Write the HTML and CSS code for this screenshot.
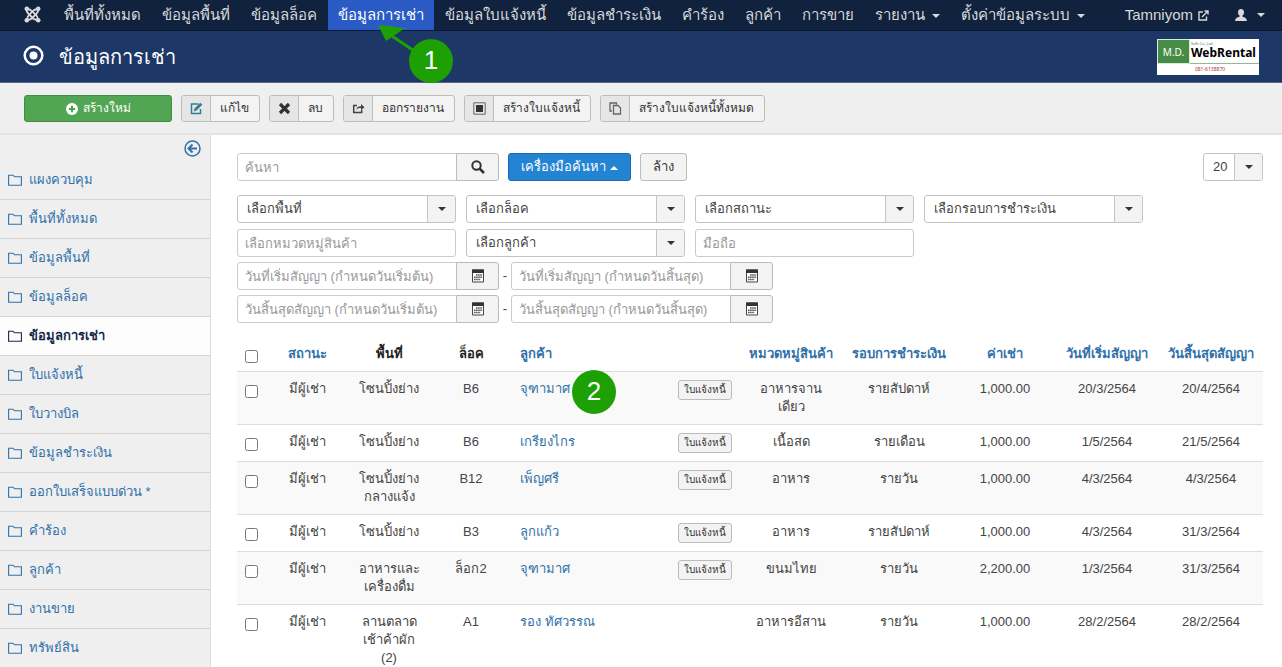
FILE: index.html
```html
<!DOCTYPE html>
<html lang="th">
<head>
<meta charset="utf-8">
<title>ข้อมูลการเช่า</title>
<link rel="stylesheet" href="styles.css">
</head>
<body>
<svg class="sprite" aria-hidden="true">
  <symbol id="folder" viewBox="0 0 14 12"><path d="M.6 11.2V1.2H5l1.6 1.6h6.8v8.400z" fill="none" stroke="currentColor" stroke-width="1.1"/></symbol>
  <symbol id="calendar" viewBox="0 0 14 14"><path d="M1.500 1h11v12h-11z" fill="#fff" stroke="#444"/><path d="M1 .5h12V4H1z" fill="#333"/><path d="M5 6h6.500M3 8.200h8.500M3 10.500h6.500" stroke="#555" stroke-width="1.400" stroke-dasharray="1.600 .5"/></symbol>
</svg>

<nav class="navbar">
  <a class="brand" href="#" aria-label="Joomla"><svg width="17" height="17" viewBox="0 0 17 17"><g fill="none" stroke="currentColor" stroke-width="1.800"><path d="M3 3.500C5.500 2.500 6.800 4 8 5.200l4.500 4.500c1 1 1.500 2.500 1 4.300"/><path d="M13.800 3c1 2.500-.5 3.800-1.700 5l-4.400 4.500c-1 1-2.500 1.500-4.400 1"/><path d="M3 3c-1 2.500.5 3.800 1.700 5l4.500 4.500c1 1 2.500 1.500 4.300 1"/><path d="M13.800 3.500C11.500 2.500 10 4 8.800 5.200L4.500 9.700c-1 1-1.500 2.500-1 4.300"/></g><g fill="currentColor"><circle cx="2.800" cy="2.800" r="2.300"/><circle cx="14.200" cy="2.800" r="2.300"/><circle cx="2.800" cy="14.200" r="2.300"/><circle cx="14.200" cy="14.200" r="2.300"/></g></svg></a>
  <a class="nav-item" href="#">พื้นที่ทั้งหมด</a>
  <a class="nav-item" href="#">ข้อมูลพื้นที่</a>
  <a class="nav-item" href="#">ข้อมูลล็อค</a>
  <a class="nav-item active" href="#" aria-current="page">ข้อมูลการเช่า</a>
  <a class="nav-item" href="#">ข้อมูลใบแจ้งหนี้</a>
  <a class="nav-item" href="#">ข้อมูลชำระเงิน</a>
  <a class="nav-item" href="#">คำร้อง</a>
  <a class="nav-item" href="#">ลูกค้า</a>
  <a class="nav-item" href="#">การขาย</a>
  <a class="nav-item" href="#">รายงาน <span class="caret"></span></a>
  <a class="nav-item" href="#">ตั้งค่าข้อมูลระบบ <span class="caret"></span></a>
  <div class="nav-right">
    <a class="nav-item site" href="#">Tamniyom <svg width="11" height="11" viewBox="0 0 11 11" fill="none" stroke="currentColor" stroke-width="1.400"><path d="M5 2H1v8h7.500V6.500M4 7l5.500-5.500M6.500 1H10v3.500"/></svg></a>
    <a class="nav-item user" href="#" aria-label="User"><svg width="12" height="12" viewBox="0 0 12 12" fill="currentColor"><path d="M6 0c2 0 3 1.300 3 3.200C9 5 8.200 6 7.500 6.600v1.200c2 .6 4.300 1.200 4.300 4.200H.2c0-3 2.300-3.600 4.300-4.200V6.600C3.800 6 3 5 3 3.200 3 1.300 4 0 6 0z"/></svg><span class="caret"></span></a>
  </div>
</nav>

<header class="header">
  <svg class="page-icon" width="21" height="21" viewBox="0 0 21 21"><circle cx="10.500" cy="10.500" r="8.800" fill="none" stroke="#fff" stroke-width="2.500"/><circle cx="10.500" cy="10.500" r="4" fill="#fff"/></svg>
  <h1>ข้อมูลการเช่า</h1>
  <div class="logo">
    <div class="logo-md">M.D.</div>
    <div class="logo-name"><small>Soft Co.,Ltd.</small><b>WebRental</b></div>
    <div class="logo-phone">081-6138870</div>
  </div>
</header>

<div class="toolbar">
  <button class="btn-new"><svg width="12" height="12" viewBox="0 0 12 12"><circle cx="6" cy="6" r="6" fill="#fff"/><path d="M6 2.800v6.400M2.800 6h6.400" stroke="#46a546" stroke-width="2"/></svg>สร้างใหม่</button>
  <button class="tool"><span class="tool-icon"><svg width="13" height="13" viewBox="0 0 13 13"><path d="M8.500 2H1.500v9.500h9V7" fill="none" stroke="#2f7f91" stroke-width="1.500"/><path d="M3.800 9.400l.7-2.800L10.300.8l2 2-5.800 5.800z" fill="#2f7f91"/></svg></span><span class="tool-text">แก้ไข</span></button>
  <button class="tool"><span class="tool-icon"><svg width="13" height="13" viewBox="0 0 13 13"><path d="M2 2l9 9M11 2l-9 9" stroke="#333" stroke-width="3.200"/></svg></span><span class="tool-text">ลบ</span></button>
  <button class="tool"><span class="tool-icon"><svg width="13" height="13" viewBox="0 0 13 13"><path d="M5 3.500H1.700v7h8V8" fill="none" stroke="#444" stroke-width="1.500"/><path d="M4.500 8c0-3 1.500-3.800 4.500-3.800V2l3.500 3.200L9 8.300V6C7 6 5.500 6 4.500 8z" fill="#444"/></svg></span><span class="tool-text">ออกรายงาน</span></button>
  <button class="tool"><span class="tool-icon"><svg width="13" height="13" viewBox="0 0 13 13"><path d="M.8.8h11.400v11.400H.8z" fill="none" stroke="#666"/><path d="M3 3h7v7H3z" fill="#333"/></svg></span><span class="tool-text">สร้างใบแจ้งหนี้</span></button>
  <button class="tool"><span class="tool-icon"><svg width="13" height="13" viewBox="0 0 13 13"><path d="M3 9H1V1h6.500v1.500M4.500 3.500h4.500l2.500 2.500v6h-7z" fill="none" stroke="#666" stroke-width="1.300"/></svg></span><span class="tool-text">สร้างใบแจ้งหนี้ทั้งหมด</span></button>
</div>

<div class="page">
  <aside class="sidebar">
    <button class="collapse" aria-label="ซ่อนเมนู"><svg width="17" height="17" viewBox="0 0 17 17" fill="none" stroke="currentColor"><circle cx="8.500" cy="8.500" r="7.500" stroke-width="1.500"/><path d="M13 8.500H5M8.500 4.500l-4 4 4 4" stroke-width="2"/></svg></button>
    <a href="#"><svg><use href="#folder"/></svg>แผงควบคุม</a>
    <a href="#"><svg><use href="#folder"/></svg>พื้นที่ทั้งหมด</a>
    <a href="#"><svg><use href="#folder"/></svg>ข้อมูลพื้นที่</a>
    <a href="#"><svg><use href="#folder"/></svg>ข้อมูลล็อค</a>
    <a class="current" href="#"><svg><use href="#folder"/></svg>ข้อมูลการเช่า</a>
    <a href="#"><svg><use href="#folder"/></svg>ใบแจ้งหนี้</a>
    <a href="#"><svg><use href="#folder"/></svg>ใบวางบิล</a>
    <a href="#"><svg><use href="#folder"/></svg>ข้อมูลชำระเงิน</a>
    <a href="#"><svg><use href="#folder"/></svg>ออกใบเสร็จแบบด่วน *</a>
    <a href="#"><svg><use href="#folder"/></svg>คำร้อง</a>
    <a href="#"><svg><use href="#folder"/></svg>ลูกค้า</a>
    <a href="#"><svg><use href="#folder"/></svg>งานขาย</a>
    <a href="#"><svg><use href="#folder"/></svg>ทรัพย์สิน</a>
  </aside>

  <main class="main">
    <div class="search-row">
      <div class="group"><input class="field" type="text" placeholder="ค้นหา" aria-label="ค้นหา"><button class="addon" aria-label="ค้นหา"><svg width="14" height="14" viewBox="0 0 14 14" fill="none" stroke="#333"><circle cx="5.500" cy="5.500" r="4.200" stroke-width="2"/><path d="M8.500 8.500l4.500 4.500" stroke-width="2.500"/></svg></button></div>
      <button class="btn-tools">เครื่องมือค้นหา <span class="caret up"></span></button>
      <button class="btn-clear">ล้าง</button>
      <span class="select limit"><select aria-label="จำนวน"><option>20</option></select><i class="arrow"></i></span>
    </div>
    <div class="filters">
      <span class="select"><select aria-label="พื้นที่"><option>เลือกพื้นที่</option></select><i class="arrow"></i></span>
      <span class="select"><select aria-label="ล็อค"><option>เลือกล็อค</option></select><i class="arrow"></i></span>
      <span class="select"><select aria-label="สถานะ"><option>เลือกสถานะ</option></select><i class="arrow"></i></span>
      <span class="select"><select aria-label="รอบการชำระเงิน"><option>เลือกรอบการชำระเงิน</option></select><i class="arrow"></i></span>
      <input class="field" type="text" placeholder="เลือกหมวดหมู่สินค้า" aria-label="หมวดหมู่สินค้า">
      <span class="select"><select aria-label="ลูกค้า"><option>เลือกลูกค้า</option></select><i class="arrow"></i></span>
      <input class="field" type="text" placeholder="มือถือ" aria-label="มือถือ">
    </div>
    <div class="dates">
      <div class="group"><input class="field" type="text" placeholder="วันที่เริ่มสัญญา (กำหนดวันเริ่มต้น)" aria-label="วันที่เริ่มสัญญา เริ่มต้น"><button class="addon" aria-label="ปฏิทิน"><svg width="14" height="14"><use href="#calendar"/></svg></button></div>
      <span class="dash">-</span>
      <div class="group"><input class="field" type="text" placeholder="วันที่เริ่มสัญญา (กำหนดวันสิ้นสุด)" aria-label="วันที่เริ่มสัญญา สิ้นสุด"><button class="addon" aria-label="ปฏิทิน"><svg width="14" height="14"><use href="#calendar"/></svg></button></div>
    </div>
    <div class="dates">
      <div class="group"><input class="field" type="text" placeholder="วันสิ้นสุดสัญญา (กำหนดวันเริ่มต้น)" aria-label="วันสิ้นสุดสัญญา เริ่มต้น"><button class="addon" aria-label="ปฏิทิน"><svg width="14" height="14"><use href="#calendar"/></svg></button></div>
      <span class="dash">-</span>
      <div class="group"><input class="field" type="text" placeholder="วันสิ้นสุดสัญญา (กำหนดวันสิ้นสุด)" aria-label="วันสิ้นสุดสัญญา สิ้นสุด"><button class="addon" aria-label="ปฏิทิน"><svg width="14" height="14"><use href="#calendar"/></svg></button></div>
    </div>

    <table class="list">
      <colgroup><col class="c-check"><col class="c-short"><col class="c-short"><col class="c-short"><col><col class="c-invoice"><col class="c-date"><col class="c-period"><col class="c-rent"><col class="c-date"><col class="c-date"></colgroup>
      <thead>
        <tr><th><input type="checkbox" aria-label="เลือกทั้งหมด"></th><th><a href="#">สถานะ</a></th><th>พื้นที่</th><th>ล็อค</th><th class="left"><a href="#">ลูกค้า</a></th><th></th><th><a href="#">หมวดหมู่สินค้า</a></th><th><a href="#">รอบการชำระเงิน</a></th><th><a href="#">ค่าเช่า</a></th><th><a href="#">วันที่เริ่มสัญญา</a></th><th><a href="#">วันสิ้นสุดสัญญา</a></th></tr>
      </thead>
      <tbody>
        <tr><td><input type="checkbox" aria-label="เลือกแถว 1"></td><td>มีผู้เช่า</td><td>โซนปิ้งย่าง</td><td>B6</td><td class="left"><a href="#">จุฑามาศ</a></td><td><button class="mini">ใบแจ้งหนี้</button></td><td>อาหารจาน<br>เดียว</td><td>รายสัปดาห์</td><td>1,000.00</td><td>20/3/2564</td><td>20/4/2564</td></tr>
        <tr><td><input type="checkbox" aria-label="เลือกแถว 2"></td><td>มีผู้เช่า</td><td>โซนปิ้งย่าง</td><td>B6</td><td class="left"><a href="#">เกรียงไกร</a></td><td><button class="mini">ใบแจ้งหนี้</button></td><td>เนื้อสด</td><td>รายเดือน</td><td>1,000.00</td><td>1/5/2564</td><td>21/5/2564</td></tr>
        <tr><td><input type="checkbox" aria-label="เลือกแถว 3"></td><td>มีผู้เช่า</td><td>โซนปิ้งย่าง<br>กลางแจ้ง</td><td>B12</td><td class="left"><a href="#">เพ็ญศรี</a></td><td><button class="mini">ใบแจ้งหนี้</button></td><td>อาหาร</td><td>รายวัน</td><td>1,000.00</td><td>4/3/2564</td><td>4/3/2564</td></tr>
        <tr><td><input type="checkbox" aria-label="เลือกแถว 4"></td><td>มีผู้เช่า</td><td>โซนปิ้งย่าง</td><td>B3</td><td class="left"><a href="#">ลูกแก้ว</a></td><td><button class="mini">ใบแจ้งหนี้</button></td><td>อาหาร</td><td>รายสัปดาห์</td><td>1,000.00</td><td>4/3/2564</td><td>31/3/2564</td></tr>
        <tr><td><input type="checkbox" aria-label="เลือกแถว 5"></td><td>มีผู้เช่า</td><td>อาหารและ<br>เครื่องดื่ม</td><td>ล็อก2</td><td class="left"><a href="#">จุฑามาศ</a></td><td><button class="mini">ใบแจ้งหนี้</button></td><td>ขนมไทย</td><td>รายวัน</td><td>2,200.00</td><td>1/3/2564</td><td>31/3/2564</td></tr>
        <tr><td><input type="checkbox" aria-label="เลือกแถว 6"></td><td>มีผู้เช่า</td><td>ลานตลาด<br>เช้าค้าผัก<br>(2)</td><td>A1</td><td class="left"><a href="#">รอง ทัศวรรณ</a></td><td></td><td>อาหารอีสาน</td><td>รายวัน</td><td>1,000.00</td><td>28/2/2564</td><td>28/2/2564</td></tr>
      </tbody>
    </table>
  </main>
</div>

<svg class="pointer" width="60" height="40" viewBox="0 0 60 40" aria-hidden="true"><path d="M45 32L14 11" stroke="#1ca003" stroke-width="3"/><path d="M0 0l27 3L8 16z" fill="#1ca003"/></svg>
<span class="step step-one">1</span>
<span class="step step-two">2</span>
</body>
</html>
```
FILE: styles.css
```css
* { box-sizing: border-box; }
body {
  margin: 0;
  height: 100vh;
  overflow: hidden;
  position: relative;
  display: flex;
  flex-direction: column;
  background: #fff;
  color: #444;
  font: 13px/18px "Liberation Sans", sans-serif;
}
a { color: #3071a9; text-decoration: none; }
button, input, select { font: inherit; color: inherit; margin: 0; }
button { cursor: pointer; }
svg { display: block; flex: none; }
.sprite { position: absolute; width: 0; height: 0; }

.caret {
  display: inline-block;
  border: 4px solid transparent;
  border-top-color: currentColor;
  border-bottom: 0;
  vertical-align: middle;
  margin-left: 3px;
}
.caret.up { border-bottom: 4px solid currentColor; border-top: 0; margin-left: 0; }

.navbar {
  flex: none;
  display: flex;
  gap: 1px;
  height: 31px;
  padding-left: 24px;
  background: #10223e;
  border-bottom: 1px solid #0b1a33;
  white-space: nowrap;
}
.brand { color: #d9d9d9; padding: 6px 12px 0 0; }
.nav-item { padding: 0 10px; color: #d9d9d9; font-size: 15px; line-height: 30px; }
.nav-item.active { background: #2a5bc5; color: #fff; }
.nav-right { display: flex; margin-left: auto; padding-right: 7px; }
.site, .user { display: flex; align-items: center; gap: 5px; }
.user { gap: 7px; padding-left: 16px; }

.header {
  flex: none;
  display: flex;
  align-items: center;
  height: 52px;
  padding: 0 23px;
  background: #1d3867;
  border-bottom: 1px solid #52688f;
}
.page-icon { margin-bottom: 3px; }
h1 { margin: 0 0 0 15px; color: #fff; font-size: 20px; font-weight: 400; line-height: 36px; }
.logo {
  margin-left: auto;
  width: 102px;
  display: grid;
  grid-template: 25px 11px / 33px 1fr;
  background: #fff;
  font-family: "Noto Sans", sans-serif;
}
.logo-md { background: #468c46; border: 1px solid #d7ead7; color: #fff; font-size: 10px; line-height: 24px; text-align: center; }
.logo-name { display: flex; flex-direction: column; padding: 2px 0 0 1px; border-bottom: 1px solid #8fbb8f; color: #000; }
.logo-name small { font-size: 4px; line-height: 5px; color: #666; }
.logo-name b { font-size: 12px; line-height: 13px; }
.logo-phone { grid-column: 1 / 3; padding-left: 4px; color: #a33; font-size: 5px; line-height: 10px; text-align: center; }

.toolbar {
  flex: none;
  display: flex;
  gap: 9px;
  height: 52px;
  padding: 12px 24px;
  background: #efefef;
  border-bottom: 2px solid #e4e4e4;
  font-size: 12px;
}
.toolbar button { height: 27px; border-radius: 3px; padding: 0; line-height: 25px; white-space: nowrap; }
.btn-new {
  display: flex;
  align-items: center;
  justify-content: center;
  gap: 5px;
  width: 148px;
  border: 1px solid #3f8f3f;
  background: #52a552;
  color: #fff;
}
.tool { display: flex; border: 1px solid #bdbdbd; background: #f3f3f3; color: #333; overflow: hidden; }
.tool-icon { display: flex; align-items: center; justify-content: center; width: 29px; height: 25px; background: #e6e6e6; border-right: 1px solid #bdbdbd; }
.tool-text { padding: 0 10px 0 9px; }

.page { flex: 1; display: flex; min-height: 0; }
.sidebar { flex: none; width: 211px; background: #efefef; border-right: 1px solid #ddd; overflow: hidden; }
.collapse { display: block; margin: 5px 9px 0 auto; padding: 0; border: 0; background: none; color: #3071a9; }
.sidebar a {
  display: flex;
  align-items: center;
  gap: 7px;
  height: 39px;
  padding-left: 8px;
  border-bottom: 1px solid #d3d3d3;
}
.sidebar a svg { width: 14px; height: 12px; }
.collapse + a { margin-top: 4px; }
.sidebar .current { background: #fcfcfc; color: #142849; font-weight: 700; }

.main { flex: 1; min-width: 0; padding: 18px 19px 0 26px; }
.search-row { display: flex; gap: 9px; }
.group { display: flex; }
.field {
  width: 220px;
  height: 28px;
  padding: 0 7px;
  border: 1px solid #ccc;
  border-radius: 3px;
  background: #fff;
}
.field::placeholder { color: #999; opacity: 1; }
.group .field { border-radius: 3px 0 0 3px; }
.addon {
  display: flex;
  align-items: center;
  justify-content: center;
  width: 43px;
  height: 28px;
  margin-left: -1px;
  border: 1px solid #bbb;
  border-radius: 0 3px 3px 0;
  background: #f3f3f3;
}
.btn-tools { height: 28px; padding: 0 12px; border: 1px solid #1c6bb0; border-radius: 3px; background: #2384d3; color: #fff; }
.btn-clear { height: 28px; padding: 0 12px; border: 1px solid #bbb; border-radius: 3px; background: #f3f3f3; color: #333; }
.select { display: grid; height: 28px; }
.select select {
  grid-area: 1 / 1;
  appearance: none;
  width: 100%;
  padding: 0 9px;
  border: 1px solid #c4c4c4;
  border-radius: 3px;
  background: #fff;
}
.arrow {
  grid-area: 1 / 1;
  justify-self: end;
  width: 28px;
  margin: 1px;
  display: grid;
  place-items: center;
  border-left: 1px solid #c4c4c4;
  border-radius: 0 2px 2px 0;
  background: #f3f3f3;
  pointer-events: none;
}
.arrow::before { content: ""; border: 4px solid transparent; border-top-color: #333; border-bottom: 0; }
.limit { width: 60px; margin-left: auto; }
.filters { display: grid; grid-template-columns: repeat(4, 219px); gap: 6px 10px; margin: 14px 0 5px; }
.filters .field { width: 100%; }
.dates { display: flex; margin-bottom: 5px; }
.dash { width: 12px; line-height: 27px; text-align: center; }

.list { width: 100%; margin-top: 14px; border-collapse: collapse; table-layout: fixed; }
.list th, .list td { padding: 8px 0; border-top: 1px solid #ddd; vertical-align: top; text-align: center; }
.list thead th { border-top: 0; color: #222; white-space: nowrap; }
.list .left { padding-left: 8px; text-align: left; }
.list tbody tr:nth-child(odd) { background: #f9f9f9; }
.list td > input, .list th > input { display: block; width: 13px; height: 13px; margin: 5px 0 0 8px; }
.c-check { width: 29px; }
.c-short { width: 82px; }
.c-invoice { width: 69px; }
.c-date { width: 104px; }
.c-period { width: 112px; }
.c-rent { width: 100px; }
.mini {
  display: block;
  width: 54px;
  height: 20px;
  margin-left: 8px;
  padding: 0;
  border: 1px solid #bbb;
  border-radius: 3px;
  background: #f3f3f3;
  color: #333;
  font-size: 10px;
  line-height: 16px;
}

.pointer { position: absolute; left: 378px; top: 25px; }
.step {
  position: absolute;
  width: 44px;
  height: 44px;
  border-radius: 50%;
  background: #1ca003;
  color: #fff;
  font-size: 26px;
  line-height: 42px;
  text-align: center;
}
.step-one { left: 409px; top: 39px; }
.step-two { left: 572px; top: 370px; }
```
